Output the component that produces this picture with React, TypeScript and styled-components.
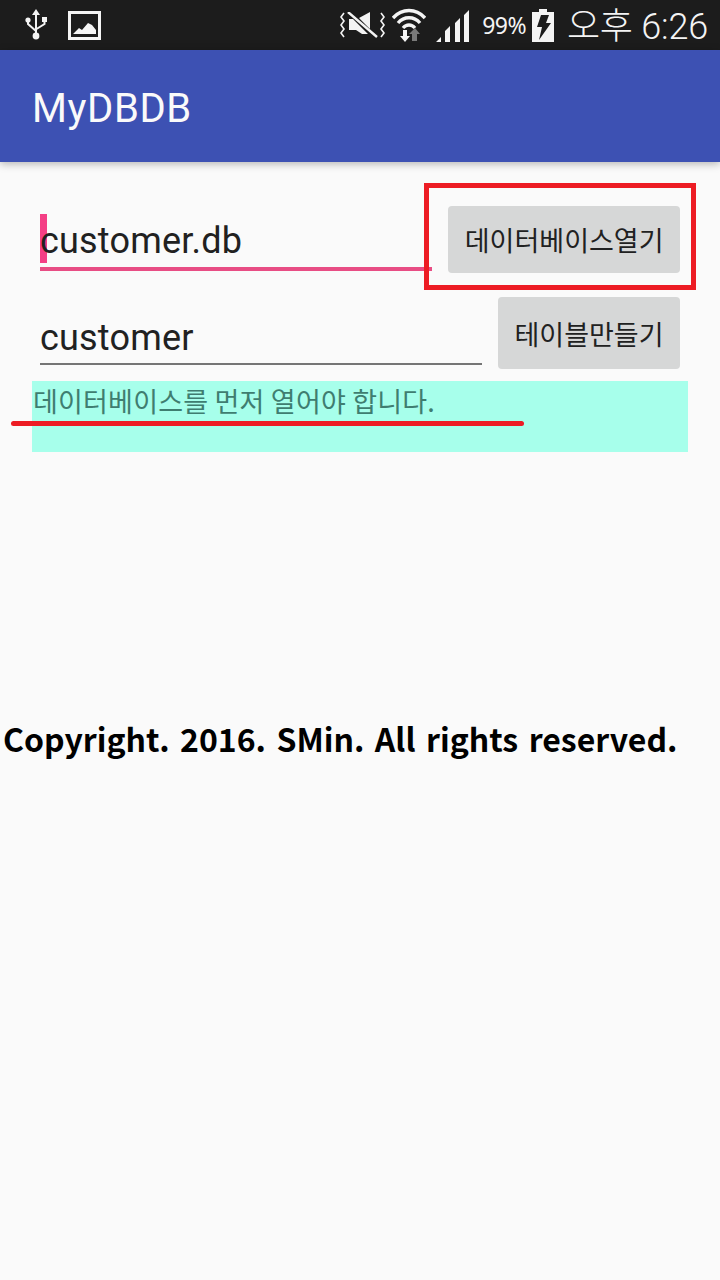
import styled, { createGlobalStyle } from "styled-components";

const GlobalStyle = createGlobalStyle`
  html, body {
    margin: 0;
    padding: 0;
    background-color: #fafafa;
  }
  * {
    box-sizing: border-box;
  }
`;

const Screen = styled.div`
  position: relative;
  width: 720px;
  height: 1280px;
  overflow: hidden;
  background-color: #fafafa;
  font-family: Roboto, "Noto Sans CJK KR", sans-serif;
`;

const StatusBar = styled.div`
  height: 50px;
  background-color: #1c1c1c;
  color: #f4f4f4;
  display: flex;
  justify-content: space-between;
  align-items: center;
  padding: 0 12px 0 25px;
`;
const StatusGroup = styled.div`
  display: flex;
  align-items: center;
`;
const Percent = styled.span`
  font-family: "Noto Sans", sans-serif;
  font-size: 23px;
  letter-spacing: -0.6px;
  margin: 0 6px 0 12px;
`;
const Clock = styled.span`
  font-family: Roboto, "Noto Sans CJK KR", sans-serif;
  font-size: 36px;
  font-weight: 300;
  letter-spacing: -0.2px;
  line-height: 42px;
  margin: 4px 0 0 13px;
  white-space: nowrap;
`;
const IconGap = styled.span<{ $w: number }>`
  display: inline-block;
  width: ${(p) => p.$w}px;
`;

const AppBar = styled.div`
  height: 112px;
  background-color: #3d51b3;
  box-shadow: 0 2px 8px rgba(0, 0, 0, 0.28);
  display: flex;
  align-items: center;
  padding: 4px 32px 0;
  position: relative;
`;
const Title = styled.h1`
  margin: 0;
  color: #fafafa;
  font-size: 40px;
  font-weight: 400;
  letter-spacing: 0.6px;
`;

const Content = styled.div`
  padding: 44px 32px 0;
`;
const FormRow = styled.div<{ $height: number; $gap: number }>`
  height: ${(p) => p.$height}px;
  margin: 0 8px ${(p) => p.$gap}px;
  display: flex;
  gap: 16px;
`;
const Field = styled.div<{ $focused?: boolean }>`
  flex: 1;
  position: relative;
  color: #212121;
  font-size: 36px;
  letter-spacing: 0.2px;
  line-height: 42px;
  display: flex;
  align-items: flex-end;
  border-bottom: ${(p) => (p.$focused ? "4px solid #e84d84" : "2px solid #757575")};
  height: ${(p) => (p.$focused ? "65px" : "68px")};
  padding-bottom: ${(p) => (p.$focused ? "5px" : "4px")};
`;
const Cursor = styled.span`
  position: absolute;
  left: 0;
  top: 8px;
  width: 7px;
  height: 49px;
  background-color: #f43f85;
`;
const FieldText = styled.span`
  position: relative;
`;
const ActionButton = styled.button`
  height: 100%;
  border: 0;
  border-radius: 4px;
  background-color: #d6d7d7;
  color: #212121;
  font-family: "Noto Sans CJK KR", sans-serif;
  font-size: 27px;
  padding: 0 16.5px;
  white-space: nowrap;
`;
const Message = styled.div`
  height: 71px;
  background-color: #a7ffeb;
  color: #3f7d70;
  font-family: "Noto Sans CJK KR", sans-serif;
  font-size: 27px;
  letter-spacing: 0.2px;
  line-height: 40px;
  padding-left: 1px;
  white-space: nowrap;
`;
const Copyright = styled.div`
  margin: 266px -29px 0;
  color: #000;
  font-family: "Noto Sans CJK KR", sans-serif;
  font-size: 32px;
  font-weight: 700;
  line-height: 40px;
  word-spacing: 3.2px;
  white-space: nowrap;
`;

const MarkBox = styled.div`
  position: absolute;
  left: 424px;
  top: 183px;
  width: 272px;
  height: 107px;
  border: 5px solid #ed1c24;
`;
const MarkLine = styled.div`
  position: absolute;
  left: 11px;
  top: 421px;
  width: 513px;
  height: 5px;
  border-radius: 3px;
  background-color: #ed1c24;
`;

function UsbIcon() {
  return (
    <svg width="22" height="32" viewBox="0 0 22 32" fill="none">
      <path d="M11 0l4 6h-3v18h-2V6H7z" fill="#f4f4f4" />
      <circle cx="11" cy="27" r="3.4" fill="#f4f4f4" />
      <circle cx="3" cy="11" r="2.6" fill="#f4f4f4" />
      <rect x="17" y="8" width="5" height="5" fill="#f4f4f4" />
      <path d="M3 12v3l8 7M19.5 12v3l-8 5" stroke="#f4f4f4" strokeWidth="2" />
    </svg>
  );
}

function ImageIcon() {
  return (
    <svg width="33" height="29" viewBox="0 0 33 29" fill="none">
      <rect x="1.5" y="1.5" width="30" height="26" stroke="#f4f4f4" strokeWidth="3" />
      <path d="M5 23l6-6 3 2 6-7 4 2 4 5v4z" fill="#f4f4f4" />
    </svg>
  );
}

function MuteIcon() {
  return (
    <svg width="47" height="26" viewBox="0 0 47 26" fill="none">
      <path d="M5 1L2 5l3 4-3 4 3 4-3 4 3 4" stroke="#f4f4f4" strokeWidth="1.6" />
      <path d="M42 1l3 4-3 4 3 4-3 4 3 4-3 4" stroke="#f4f4f4" strokeWidth="1.6" />
      <path d="M10 7h4l15 15h-6l-6-4h-7zM20 6l11-6v17z" fill="#f4f4f4" />
      <path d="M9 0l29 25" stroke="#f4f4f4" strokeWidth="2.4" />
    </svg>
  );
}

function WifiIcon() {
  return (
    <svg width="34" height="34" viewBox="0 0 34 34" fill="none">
      <path d="M1 10C10 0 24 0 33 10" stroke="#f4f4f4" strokeWidth="3.4" />
      <path d="M6 15c6-7 16-7 22 0" stroke="#f4f4f4" strokeWidth="3.4" />
      <path d="M11 20c3.5-4 8.5-4 12 0" stroke="#f4f4f4" strokeWidth="3.4" />
      <path d="M11 22h4v6h3l-5 6-5-6h3z" fill="#f4f4f4" />
      <path d="M20 33v-7h-3l6-6 5 6h-3v7z" fill="#7a7a7a" />
    </svg>
  );
}

function SignalIcon() {
  return (
    <svg width="34" height="33" viewBox="0 0 34 33" fill="#f4f4f4">
      <path d="M0 33l5-5v5zM9 33V22l5-5v16zM19 33V14l5-5v24zM28 33V6l5-5v32z" />
    </svg>
  );
}

function BatteryIcon() {
  return (
    <svg width="22" height="33" viewBox="0 0 22 33">
      <path d="M7 0h8v3h7v30H0V3h7z" fill="#f4f4f4" />
      <path d="M9 6h8l-3 8h5L7 31l3-13H5z" fill="#1c1c1c" />
    </svg>
  );
}

function App() {
  return (
    <>
      <GlobalStyle />
      <Screen>
        <StatusBar>
          <StatusGroup>
            <UsbIcon />
            <IconGap $w={21} />
            <ImageIcon />
          </StatusGroup>
          <StatusGroup>
            <MuteIcon />
            <IconGap $w={6} />
            <WifiIcon />
            <IconGap $w={10} />
            <SignalIcon />
            <Percent>99%</Percent>
            <BatteryIcon />
            <Clock>오후 6:26</Clock>
          </StatusGroup>
        </StatusBar>
        <AppBar>
          <Title>MyDBDB</Title>
        </AppBar>
        <Content>
          <FormRow $height={67} $gap={24}>
            <Field $focused>
              <Cursor />
              <FieldText>customer.db</FieldText>
            </Field>
            <ActionButton>데이터베이스열기</ActionButton>
          </FormRow>
          <FormRow $height={72} $gap={12}>
            <Field>customer</Field>
            <ActionButton>테이블만들기</ActionButton>
          </FormRow>
          <Message>데이터베이스를 먼저 열어야 합니다.</Message>
          <Copyright>Copyright. 2016. SMin. All rights reserved.</Copyright>
        </Content>
        <MarkBox />
        <MarkLine />
      </Screen>
    </>
  );
}

export default App;
